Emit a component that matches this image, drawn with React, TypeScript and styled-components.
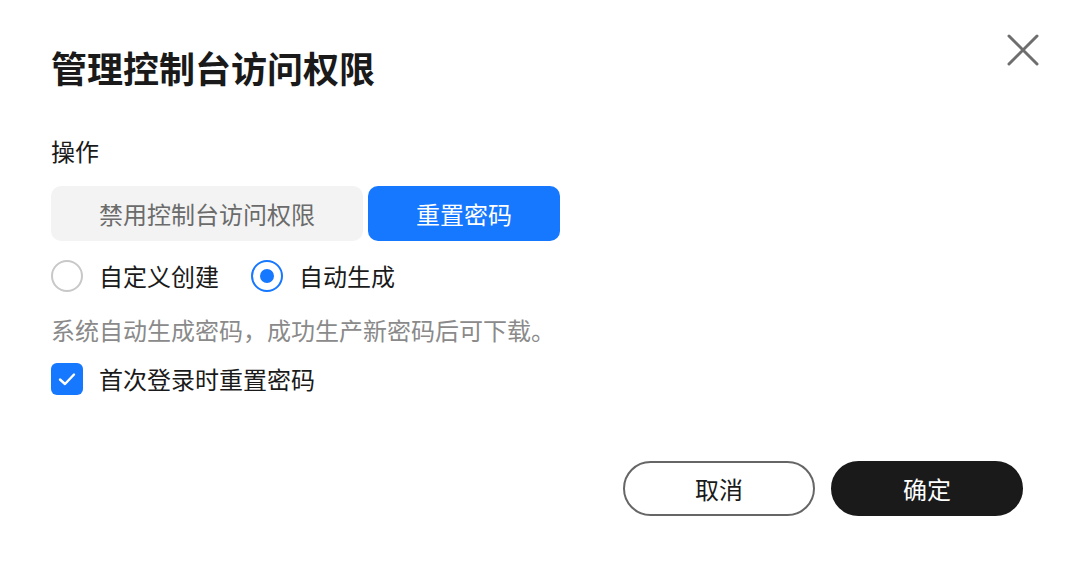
import React, { useState } from "react";
import styled, { createGlobalStyle } from "styled-components";

const GlobalStyle = createGlobalStyle`
  html, body {
    margin: 0;
    padding: 0;
    background: #ffffff;
  }
  body {
    font-family: "Noto Sans CJK SC", "Noto Sans", sans-serif;
    color: #1a1a1a;
  }
`;

const Dialog = styled.div`
  position: relative;
  box-sizing: border-box;
  width: 1072px;
  height: 570px;
  padding: 45px 49px 0 51px;
  display: flex;
  flex-direction: column;
  background: #fff;
`;

const Title = styled.h1`
  margin: 0;
  font-size: 36px;
  line-height: 44px;
  font-weight: 700;
  color: #1a1a1a;
`;

const CloseButton = styled.button`
  position: absolute;
  top: 32px;
  right: 31px;
  width: 36px;
  height: 36px;
  padding: 0;
  border: none;
  background: none;
  cursor: pointer;
  display: flex;
  align-items: center;
  justify-content: center;
`;

const Label = styled.div`
  margin-top: 46px;
  font-size: 24px;
  line-height: 32px;
  color: #1a1a1a;
`;

const Tabs = styled.div`
  margin-top: 19px;
  display: flex;
  gap: 5px;
`;

const Tab = styled.button<{ $active?: boolean }>`
  height: 55px;
  padding: 0 48px;
  border: none;
  border-radius: 10px;
  font-family: inherit;
  font-size: 24px;
  background: ${(p) => (p.$active ? "#1677ff" : "#f3f3f3")};
  color: ${(p) => (p.$active ? "#ffffff" : "#6b6b6b")};
  cursor: pointer;
`;

const RadioRow = styled.div`
  margin-top: 19px;
  display: flex;
  align-items: center;
  gap: 32px;
`;

const RadioOption = styled.label`
  display: flex;
  align-items: center;
  gap: 16px;
  font-size: 24px;
  line-height: 32px;
  cursor: pointer;
`;

const RadioCircle = styled.span<{ $checked?: boolean }>`
  box-sizing: border-box;
  width: 32px;
  height: 32px;
  border-radius: 50%;
  border: 2px solid ${(p) => (p.$checked ? "#1677ff" : "#c8c8c8")};
  display: flex;
  align-items: center;
  justify-content: center;

  &::after {
    content: "";
    width: 14px;
    height: 14px;
    border-radius: 50%;
    background: #1677ff;
    display: ${(p) => (p.$checked ? "block" : "none")};
  }
`;

const Hint = styled.p`
  margin: 22px 0 0;
  font-size: 24px;
  line-height: 32px;
  color: #8a8a8a;
`;

const CheckRow = styled.label`
  margin-top: 17px;
  display: flex;
  align-items: center;
  gap: 16px;
  font-size: 24px;
  line-height: 32px;
  cursor: pointer;
`;

const CheckBox = styled.span`
  width: 32px;
  height: 32px;
  border-radius: 6px;
  background: #1677ff;
  display: flex;
  align-items: center;
  justify-content: center;
`;

const Footer = styled.div`
  margin-top: 66px;
  display: flex;
  justify-content: flex-end;
  gap: 16px;
`;

const FooterButton = styled.button<{ $primary?: boolean }>`
  box-sizing: border-box;
  width: 192px;
  height: 55px;
  border-radius: 28px;
  font-family: inherit;
  font-size: 24px;
  border: 2px solid ${(p) => (p.$primary ? "#1a1a1a" : "#666666")};
  background: ${(p) => (p.$primary ? "#1a1a1a" : "#ffffff")};
  color: ${(p) => (p.$primary ? "#ffffff" : "#1a1a1a")};
  cursor: pointer;
`;

export default function App() {
  const [mode, setMode] = useState<"custom" | "auto">("auto");
  return (
    <>
      <GlobalStyle />
      <Dialog>
        <Title>管理控制台访问权限</Title>
        <CloseButton aria-label="关闭">
          <svg width="32" height="32" viewBox="0 0 32 32">
            <path
              d="M2 2 L30 30 M30 2 L2 30"
              stroke="#6e6e6e"
              strokeWidth="3"
              strokeLinecap="round"
              fill="none"
            />
          </svg>
        </CloseButton>
        <Label>操作</Label>
        <Tabs>
          <Tab>禁用控制台访问权限</Tab>
          <Tab $active>重置密码</Tab>
        </Tabs>
        <RadioRow>
          <RadioOption onClick={() => setMode("custom")}>
            <RadioCircle $checked={mode === "custom"} />
            自定义创建
          </RadioOption>
          <RadioOption onClick={() => setMode("auto")}>
            <RadioCircle $checked={mode === "auto"} />
            自动生成
          </RadioOption>
        </RadioRow>
        <Hint>系统自动生成密码，成功生产新密码后可下载。</Hint>
        <CheckRow>
          <CheckBox>
            <svg width="20" height="20" viewBox="0 0 20 20">
              <path
                d="M3 10.5 L8 15 L17 5.5"
                stroke="#fff"
                strokeWidth="2.4"
                strokeLinecap="round"
                strokeLinejoin="round"
                fill="none"
              />
            </svg>
          </CheckBox>
          首次登录时重置密码
        </CheckRow>
        <Footer>
          <FooterButton>取消</FooterButton>
          <FooterButton $primary>确定</FooterButton>
        </Footer>
      </Dialog>
    </>
  );
}
